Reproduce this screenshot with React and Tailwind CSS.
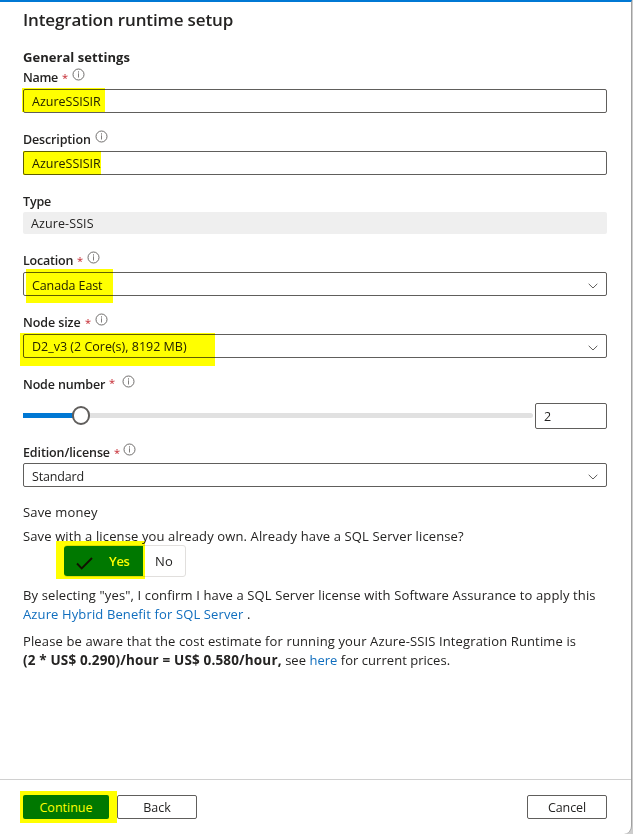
import React from "react";

function InfoIcon() {
  return (
    <svg className="block h-[13px] w-[13px] shrink-0" viewBox="0 0 13 13" fill="none">
      <circle cx="6.5" cy="6.5" r="5.5" stroke="#605e5c" strokeWidth="0.9" />
      <rect x="6" y="5.3" width="1" height="4.2" fill="#605e5c" fillOpacity="0.8" />
      <rect x="6" y="3.4" width="1" height="1.1" fill="#605e5c" />
    </svg>
  );
}

function Chevron() {
  return (
    <svg className="block h-[6px] w-[10px] shrink-0" viewBox="0 0 10 6" fill="none">
      <path d="M0.7 0.8 L5 5 L9.3 0.8" stroke="#605e5c" strokeWidth="1" />
    </svg>
  );
}

function Highlight({ className }) {
  return <div className={"pointer-events-none absolute bg-[#ffff00] mix-blend-multiply " + className} />;
}

function Label({ text, width, tracking = "tracking-[-0.15px]", star, info, className = "" }) {
  return (
    <div className={"flex h-5 items-center whitespace-nowrap font-semibold " + className}>
      <span className={"pt-[2px] " + width + " " + tracking}>{text}</span>
      {star && <span className={"w-[6px] pt-[2px] text-center text-[11px] font-normal text-[#c4262e] " + star}>*</span>}
      {info && (
        <span className={"-mt-[5px] " + info}>
          <InfoIcon />
        </span>
      )}
    </div>
  );
}

function Field({ children, tracking = "", select, highlight, pad = "pt-[2px]", className = "" }) {
  return (
    <div className={"relative flex h-6 items-center justify-between rounded-[2px] border border-[#605e5c] pr-2 pl-2 " + className}>
      <span className={"whitespace-nowrap " + pad + " " + tracking}>{children}</span>
      {select && (
        <span className="mt-[3px]">
          <Chevron />
        </span>
      )}
      {highlight && <Highlight className={highlight} />}
    </div>
  );
}

export default function App() {
  return (
    <div className="h-[834px] w-[633px] overflow-hidden bg-[#cdcdcd] font-['Open_Sans','Noto_Sans',sans-serif] text-[12.5px] leading-5 text-[#242322]">
      <div className="flex h-[834px] w-[632px] flex-col rounded-br-[8px] border-t-2 border-r border-t-[#0078d4] border-r-[#a0a0a0] bg-white">
        <main className="flex flex-col pr-[24px] pl-[23px]">
          <h1 className="flex h-9 items-center whitespace-nowrap text-[17px] font-semibold tracking-[-0.12px]">Integration runtime setup</h1>
          <h2 className="mt-[9px] h-5 whitespace-nowrap text-[13px] font-bold tracking-[0.05px]">General settings</h2>

          <Label text="Name" width="w-[35px]" tracking="tracking-[-0.3px]" star="ml-1" info="ml-[4px]" />
          <Field className="mt-0.5" highlight="-top-[2px] -left-[2px] h-6 w-[83px]">AzureSSISIR</Field>

          <Label className="mt-4" text="Description" width="w-[67px]" info="ml-[5px]" />
          <Field className="mt-0.5" highlight="-top-px -left-px h-6 w-[78px]">AzureSSISIR</Field>

          <Label className="mt-4" text="Type" width="w-[35px]" />
          <div className="mt-px flex h-[22px] items-center rounded-[2px] bg-[#efefef] pt-[2px] pl-2 tracking-[0.1px]">Azure-SSIS</div>

          <Label className="mt-4" text="Location" width="w-[50px]" tracking="tracking-[-0.2px]" star="ml-1" info="ml-[4px]" />
          <Field select className="mt-0.5" pad="pt-[3px]" tracking="tracking-[-0.1px]" highlight="-top-[4px] left-[2px] h-[34px] w-[87px]">Canada East</Field>

          <Label className="mt-4" text="Node size" width="w-[58px]" tracking="tracking-[-0.1px]" star="ml-1" info="ml-[4px]" />
          <Field select className="mt-0.5" highlight="-top-[2px] -left-[4px] h-[33px] w-[195px]">D2_v3 (2 Core(s), 8192 MB)</Field>

          <Label className="mt-4" text="Node number" width="w-[82px]" star="ml-1 -mt-1" info="ml-[7px]" />
          <div className="mt-[9px] flex h-[26px] items-center">
            <div className="relative -mt-px h-[5px] w-[510px] rounded-r-[3px] bg-[#e1e1e1]">
              <div className="h-[5px] w-[56px] bg-[#0078d4]" />
              <div className="absolute -top-[7px] left-[49px] h-[19px] w-[18px] rounded-full border-2 border-[#605e5c] bg-white" />
            </div>
            <div className="ml-[2px] flex h-[26px] w-[72px] items-center rounded-[2px] border border-[#605e5c] pt-px pl-2">2</div>
          </div>

          <Label className="mt-[13px]" text="Edition/license" width="w-[87px]" tracking="tracking-[-0.12px]" star="ml-1" info="ml-[3px]" />
          <Field select className="mt-px" pad="pt-[3px]" tracking="tracking-[-0.15px]">Standard</Field>

          <p className="mt-[15px] h-5 whitespace-nowrap text-[13px] tracking-[0.15px]">Save money</p>
          <p className="mt-1 h-[19px] whitespace-nowrap text-[13px] tracking-[0.125px]">Save with a license you already own. Already have a SQL Server license?</p>
          <div className="relative ml-[41px] flex h-8 w-[122px] rounded-[3px] border border-[#e1dfdd] text-[13px]">
            <div className="-ml-px flex w-[79px] items-center rounded-l-[3px] bg-[#0078d4] font-semibold text-white">
              <svg className="mt-1 ml-[12px] h-[13px] w-[17px]" viewBox="0 0 17 13" fill="none">
                <path d="M1 6.5 L5.7 11.3 L16 1" stroke="#111" strokeWidth="1.9" />
              </svg>
              <span className="ml-[16px] tracking-[-0.3px]">Yes</span>
            </div>
            <div className="flex flex-1 items-center justify-center tracking-[0.3px]">No</div>
            <Highlight className="-top-[5px] -left-[9px] h-[38px] w-[89px]" />
          </div>

          <div className="mt-[9px] whitespace-nowrap text-[13px] leading-[19px] tracking-[0.125px]">
            <p>By selecting "yes", I confirm I have a SQL Server license with Software Assurance to apply this</p>
            <p>
              <span className="text-[#106ebe]">Azure Hybrid Benefit for SQL Server</span> .
            </p>
          </div>
          <div className="mt-2 whitespace-nowrap text-[13px] leading-[19px] tracking-[0.13px]">
            <p>Please be aware that the cost estimate for running your Azure-SSIS Integration Runtime is</p>
            <p>
              <b className="text-[13.5px] leading-none tracking-[0.16px]">(2 * US$ 0.290)/hour = US$ 0.580/hour,</b>
              <span className="tracking-[0.03px]">
                {" "}see <span className="text-[#106ebe]">here</span> for current prices.
              </span>
            </p>
          </div>
        </main>

        <footer className="mt-auto flex h-[55px] border-t border-[#d0d0d0] pr-[24px] pl-[23px] pt-[15px] text-[13px]">
          <div className="relative flex h-6 w-[86px] items-center justify-center rounded-[2px] bg-[#0078d4] pt-[2px] text-[12.5px] text-white">
            Continue
            <Highlight className="-top-[4px] -left-[3px] h-8 w-[97px]" />
          </div>
          <div className="ml-2 flex h-6 w-20 items-center justify-center rounded-[2px] border border-[#605e5c] pt-px text-[12.5px]">Back</div>
          <div className="ml-auto flex h-6 w-20 items-center justify-center rounded-[2px] border border-[#605e5c] pt-px text-[12.5px] tracking-[-0.1px]">Cancel</div>
        </footer>
      </div>
    </div>
  );
}
